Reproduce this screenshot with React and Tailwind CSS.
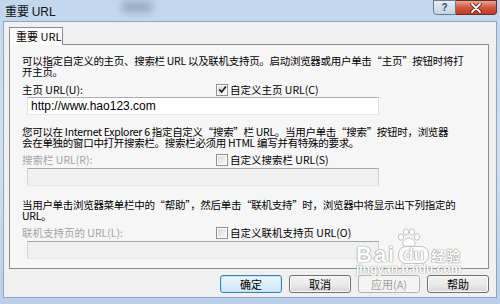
import React from "react";

const Checkbox = ({ checked }) => (
  <span className="w-[12px] h-[12px] border border-[#8e8f8f] bg-white flex items-center justify-center shrink-0">
    <span className="w-[8px] h-[8px] bg-gradient-to-br from-[#d9dcdf] to-[#f7f7f7] flex items-center justify-center">
      {checked && (
        <svg width="9" height="9" viewBox="0 0 9 9" className="shrink-0">
          <path d="M1.2 4.4 L3.6 6.9 L7.9 1.4" stroke="#1e1e1e" strokeWidth="1.7" fill="none" />
        </svg>
      )}
    </span>
  </span>
);

const FieldRow = ({ label, check, checked, disabled }) => (
  <div className="flex items-center h-[11px] leading-[11px]">
    <span className={disabled ? "w-[194px] text-[#a3a3a3]" : "w-[194px]"}>{label}</span>
    <Checkbox checked={checked} />
    <span className="ml-[2px]">{check}</span>
  </div>
);

const Field = ({ value, disabled }) => (
  <div
    className={
      disabled
        ? "ml-[5px] w-[352px] h-[18px] border border-[#a5a5a5] border-b-[#e6e6e6] border-x-[#d5d5d5] bg-[#f0f0f0]"
        : "ml-[5px] w-[352px] h-[18px] border border-[#abadb3] border-b-[#e3e9ef] border-x-[#dbdfe6] bg-white flex items-center pl-[3px] font-['Liberation_Sans',sans-serif] text-[12px]"
    }
  >
    {value}
  </div>
);

const Button = ({ children, primary, disabled }) => {
  let cls =
    "w-[62px] h-[18px] rounded-[3px] border flex items-center justify-center text-[11px] leading-none ";
  if (primary) cls += "border-[#3c7fb1] bg-gradient-to-b from-[#eaf6fd] to-[#cde6f6] shadow-[inset_0_0_0_1px_#c4e5f6]";
  else if (disabled) cls += "border-[#adb2b5] bg-[#f4f4f4] text-[#a0a0a0]";
  else cls += "border-[#707070] bg-gradient-to-b from-[#f2f2f2] via-[#ebebeb] to-[#d4d4d4] shadow-[inset_0_0_0_1px_#fbfbfb]";
  return <div className={cls}>{children}</div>;
};

export default function App() {
  return (
    <div className="w-[500px] h-[304px] overflow-hidden relative flex flex-col bg-gradient-to-b from-[#c2d7ed] via-[#cfdff0] to-[#b9d0e8] font-['Noto_Sans_CJK_SC','Noto_Sans',sans-serif] text-[10.5px] text-black">
      <div className="absolute left-[122px] top-[2px] w-[30px] h-[10px] bg-[#6f8398] blur-[4px] opacity-60" />

      {/* title bar */}
      <div className="h-[21px] shrink-0 flex items-start relative">
        <div className="pl-[5px] pt-[3px] text-[12px] leading-[15px] text-[#111]">
          重要 <span className="font-['Liberation_Sans',sans-serif]">URL</span>
        </div>
        <div className="ml-auto mr-[3px] flex">
          <div className="w-[23px] h-[15px] border border-[#6a7a8e] rounded-bl-[4px] bg-gradient-to-b from-[#e7eef6] to-[#c3d3e5] flex items-center justify-center text-[10px] font-bold text-[#3a4a5c] font-['Liberation_Sans',sans-serif] leading-none">
            ?
          </div>
          <div className="w-[41px] h-[15px] border border-l-0 border-[#6b2c24] rounded-br-[4px] bg-gradient-to-b from-[#e9a293] via-[#d2563f] to-[#c13a24] flex items-center justify-center">
            <svg width="12" height="10" viewBox="0 0 12 10">
              <path d="M2 1 L10 9 M10 1 L2 9" stroke="#4a1a14" strokeWidth="3.4" strokeLinecap="round" />
              <path d="M2 1 L10 9 M10 1 L2 9" stroke="#ffffff" strokeWidth="1.8" strokeLinecap="round" />
            </svg>
          </div>
        </div>
      </div>

      {/* client area */}
      <div className="flex-1 mx-[3px] mb-[6px] bg-[#f0f0f0] border border-[#8da6c1] pl-[5px] pr-[7px] pt-[5px] flex flex-col">
        <div className="relative z-10 -mb-px w-[54px] h-[18px] border border-b-0 border-[#898c95] bg-[#fbfbfb] flex items-center pl-[6px] text-[11px]">
          重要 URL
        </div>
        <div className="w-[480px] h-[225px] border border-[#898c95] bg-[#f6f6f6] pl-[12px] pt-[10px] whitespace-nowrap">
          <div className="leading-[11px] tracking-[-0.3px]">
            <div>可以指定自定义的主页、搜索栏 URL 以及联机支持页。启动浏览器或用户单击“主页”按钮时将打</div>
            <div>开主页。</div>
          </div>
          <div className="mt-[7px]">
            <FieldRow label="主页 URL(U):" check="自定义主页 URL(C)" checked />
          </div>
          <div className="mt-[2px]">
            <Field value="http://www.hao123.com" />
          </div>

          <div className="mt-[11px] leading-[11px] tracking-[-0.3px]">
            <div>您可以在 Internet Explorer 6 指定自定义“搜索”栏 URL。当用户单击“搜索”按钮时，浏览器</div>
            <div>会在单独的窗口中打开搜索栏。搜索栏必须用 HTML 编写并有特殊的要求。</div>
          </div>
          <div className="mt-[6px]">
            <FieldRow label="搜索栏 URL(R):" check="自定义搜索栏 URL(S)" disabled />
          </div>
          <div className="mt-[3px]">
            <Field disabled />
          </div>

          <div className="mt-[13px] leading-[11px] tracking-[-0.3px]">
            <div>当用户单击浏览器菜单栏中的“帮助”，然后单击“联机支持”时，浏览器中将显示出下列指定的</div>
            <div>URL。</div>
          </div>
          <div className="mt-[6px]">
            <FieldRow label="联机支持页的 URL(L):" check="自定义联机支持页 URL(O)" disabled />
          </div>
          <div className="mt-[3px]">
            <Field disabled />
          </div>
        </div>

        <div className="mt-[6px] flex justify-end gap-[7px]">
          <Button primary>确定</Button>
          <Button>取消</Button>
          <Button disabled>应用(A)</Button>
          <Button>帮助</Button>
        </div>
      </div>

      {/* Baidu jingyan watermark */}
      <div className="absolute left-[356px] top-[228px] w-[112px] h-[46px] pointer-events-none">
        <svg width="26" height="20" viewBox="0 0 26 20" className="absolute left-[40px] top-0">
          <g fill="#ffffff" stroke="#c4c4c4" strokeWidth="1">
            <ellipse cx="5" cy="9" rx="2.6" ry="3.2" />
            <ellipse cx="10" cy="4" rx="2.6" ry="3.2" />
            <ellipse cx="16" cy="4" rx="2.6" ry="3.2" />
            <ellipse cx="21" cy="9" rx="2.6" ry="3.2" />
            <path d="M13 10 C9 10 6 14 7 17 C8 19 11 18 13 18 C15 18 18 19 19 17 C20 14 17 10 13 10 Z" />
          </g>
        </svg>
        <div className="absolute left-0 top-[17px] flex items-center h-[19px] text-white font-['Liberation_Sans',sans-serif] font-bold [text-shadow:0_0_1px_#8f8f8f,0_0_1px_#8f8f8f,0_0_1px_#8f8f8f]">
          <span className="text-[22px] leading-none tracking-[2px]">Bai</span>
          <span className="ml-[2px] w-[31px] h-[18px] rounded-[8px] bg-white/70 border border-[#c4c4c4] text-[17px] leading-[16px] flex justify-center">du</span>
          <span className="ml-[2px] text-[14px] leading-none tracking-[1px] font-['Noto_Sans_CJK_SC',sans-serif]">经验</span>
        </div>
        <div className="absolute left-0 top-[36px] text-[12px] leading-[11px] text-white font-['Liberation_Sans',sans-serif] font-bold [text-shadow:0_0_1px_#999,0_0_1px_#999]">
          jingyan.baidu.com
        </div>
      </div>
    </div>
  );
}
